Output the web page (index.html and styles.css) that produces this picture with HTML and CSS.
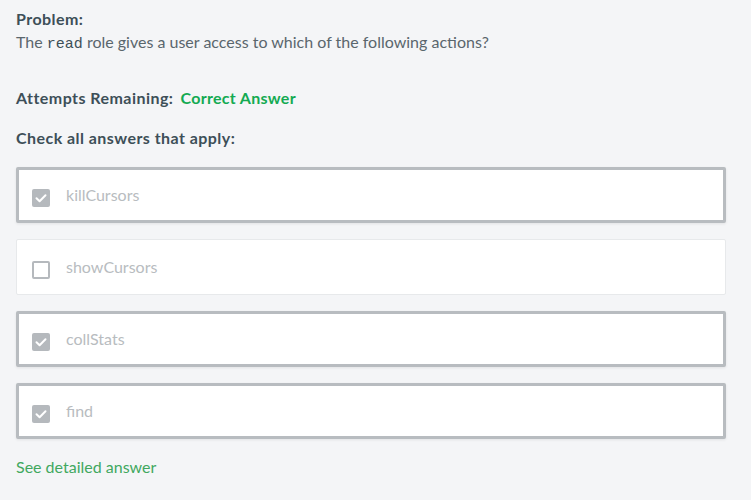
FILE: index.html
```html
<!DOCTYPE html>
<html>
<head>
<meta charset="utf-8">
<link rel="stylesheet" href="styles.css">
</head>
<body>
<div class="page">
  <div class="problem">
    <div class="label">Problem:</div>
    <div class="question">The <code class="mono">read</code> role gives a user access to which of the following actions?</div>
  </div>
  <div class="attempts"><span class="label">Attempts Remaining:</span> <span class="correct">Correct Answer</span></div>
  <div class="label check-all">Check all answers that apply:</div>
  <div class="options">
    <div class="option selected"><span class="box checked"><svg viewBox="0 0 18 18" width="18" height="18"><path d="M4.5 9.2 L7.6 12.2 L13.5 6.2" fill="none" stroke="#fff" stroke-width="2" stroke-linecap="round" stroke-linejoin="round"/></svg></span><span class="text">killCursors</span></div>
    <div class="option"><span class="box"></span><span class="text">showCursors</span></div>
    <div class="option selected"><span class="box checked"><svg viewBox="0 0 18 18" width="18" height="18"><path d="M4.5 9.2 L7.6 12.2 L13.5 6.2" fill="none" stroke="#fff" stroke-width="2" stroke-linecap="round" stroke-linejoin="round"/></svg></span><span class="text">collStats</span></div>
    <div class="option selected"><span class="box checked"><svg viewBox="0 0 18 18" width="18" height="18"><path d="M4.5 9.2 L7.6 12.2 L13.5 6.2" fill="none" stroke="#fff" stroke-width="2" stroke-linecap="round" stroke-linejoin="round"/></svg></span><span class="text">find</span></div>
  </div>
  <a class="detail" href="#">See detailed answer</a>
</div>
</body>
</html>
```
FILE: styles.css
```css
html, body {
  margin: 0;
  padding: 0;
  background: #f4f5f7;
}
body {
  font-family: Lato, "Open Sans", sans-serif;
  font-size: 16px;
  color: #3d4f58;
}
.page {
  padding: 9px 25px 0 16px;
}
.label {
  font-weight: bold;
  color: #3d4f58;
  letter-spacing: 0.45px;
}
.problem .label {
  line-height: 20px;
}
.question {
  line-height: 22px;
  height: 22px;
  margin-top: 2px;
  color: #5a666d;
}
.mono {
  font-family: "Liberation Mono", "DejaVu Sans Mono", monospace;
  font-size: 15px;
  line-height: 1;
  color: #3d4f58;
}
.attempts {
  margin-top: 35px;
  line-height: 20px;
}
.correct {
  color: #13aa52;
  font-weight: bold;
  letter-spacing: 0.3px;
  margin-left: 3px;
}
.check-all {
  margin-top: 20px;
  line-height: 20px;
}
.options {
  margin-top: 19px;
  display: flex;
  flex-direction: column;
  gap: 16px;
}
.option {
  display: flex;
  align-items: center;
  height: 56px;
  box-sizing: border-box;
  background: #fff;
  border: 1px solid #e7e9eb;
  padding-left: 15px;
  padding-top: 5px;
  border-radius: 2px;
}
.option.selected {
  border: 3px solid #b8bcc0;
  padding-left: 13px;
  box-shadow: 0 1px 3px rgba(0,0,0,0.08);
}
.box {
  width: 18px;
  height: 18px;
  box-sizing: border-box;
  border: 2px solid #b5b9bd;
  border-radius: 2px;
  display: inline-flex;
}
.box.checked {
  background: #b5b9bd;
  border: none;
}
.text {
  margin-left: 16px;
  color: #b8bcc0;
  margin-top: -6px;
}
.detail {
  display: inline-block;
  margin-top: 18px;
  color: #41a85f;
  text-decoration: none;
  line-height: 20px;
}
```
